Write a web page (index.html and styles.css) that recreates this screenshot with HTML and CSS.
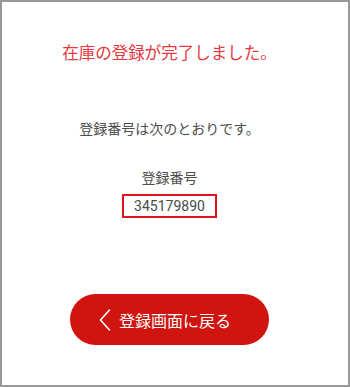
FILE: index.html
```html
<!DOCTYPE html>
<html lang="ja">
<head>
<meta charset="utf-8">
<link rel="stylesheet" href="styles.css">
</head>
<body>
<div class="frame">
  <h1 class="title">在庫の登録が完了しました。</h1>
  <p class="lead">登録番号は次のとおりです。</p>
  <p class="label">登録番号</p>
  <div class="number">345179890</div>
  <a class="back-btn" href="#">
    <svg class="chev" width="12" height="22" viewBox="0 0 12 22"><path d="M10.5 1 L1.5 11 L10.5 21" fill="none" stroke="#fff" stroke-width="1.6" stroke-linecap="round" stroke-linejoin="round"/></svg>
    <span>登録画面に戻る</span>
  </a>
</div>
</body>
</html>
```
FILE: styles.css
```css
html, body {
  margin: 0;
  padding: 0;
  background: #fff;
}
body {
  font-family: "Noto Sans CJK JP", "Noto Sans", sans-serif;
  color: #4d4d4d;
}
.frame {
  box-sizing: border-box;
  width: 350px;
  height: 387px;
  border: 2px solid #999;
  padding: 38px 11px 0 0;
  display: flex;
  flex-direction: column;
  align-items: center;
}
.title {
  margin: 0;
  font-size: 16.5px;
  line-height: 25px;
  font-weight: 400;
  color: #e8383d;
}
.lead {
  margin: 53px 0 0;
  font-size: 14px;
  line-height: 21px;
}
.label {
  margin: 28px 0 0;
  font-size: 14px;
  line-height: 21px;
}
.number {
  margin-top: 6px;
  border: 2px solid #e0141e;
  padding: 0 10px;
  height: 20px;
  line-height: 20px;
  font-family: Roboto, "Noto Sans", sans-serif;
  font-size: 14px;
  color: #4a4a4a;
}
.back-btn {
  margin-top: 76px;
  width: 199px;
  height: 51px;
  border-radius: 26px;
  background: #d0140f;
  color: #fff;
  text-decoration: none;
  display: flex;
  align-items: center;
  padding-left: 29px;
  box-sizing: border-box;
  gap: 8px;
  font-size: 16px;
}
.chev {
  display: block;
  margin-top: 1px;
}
```
